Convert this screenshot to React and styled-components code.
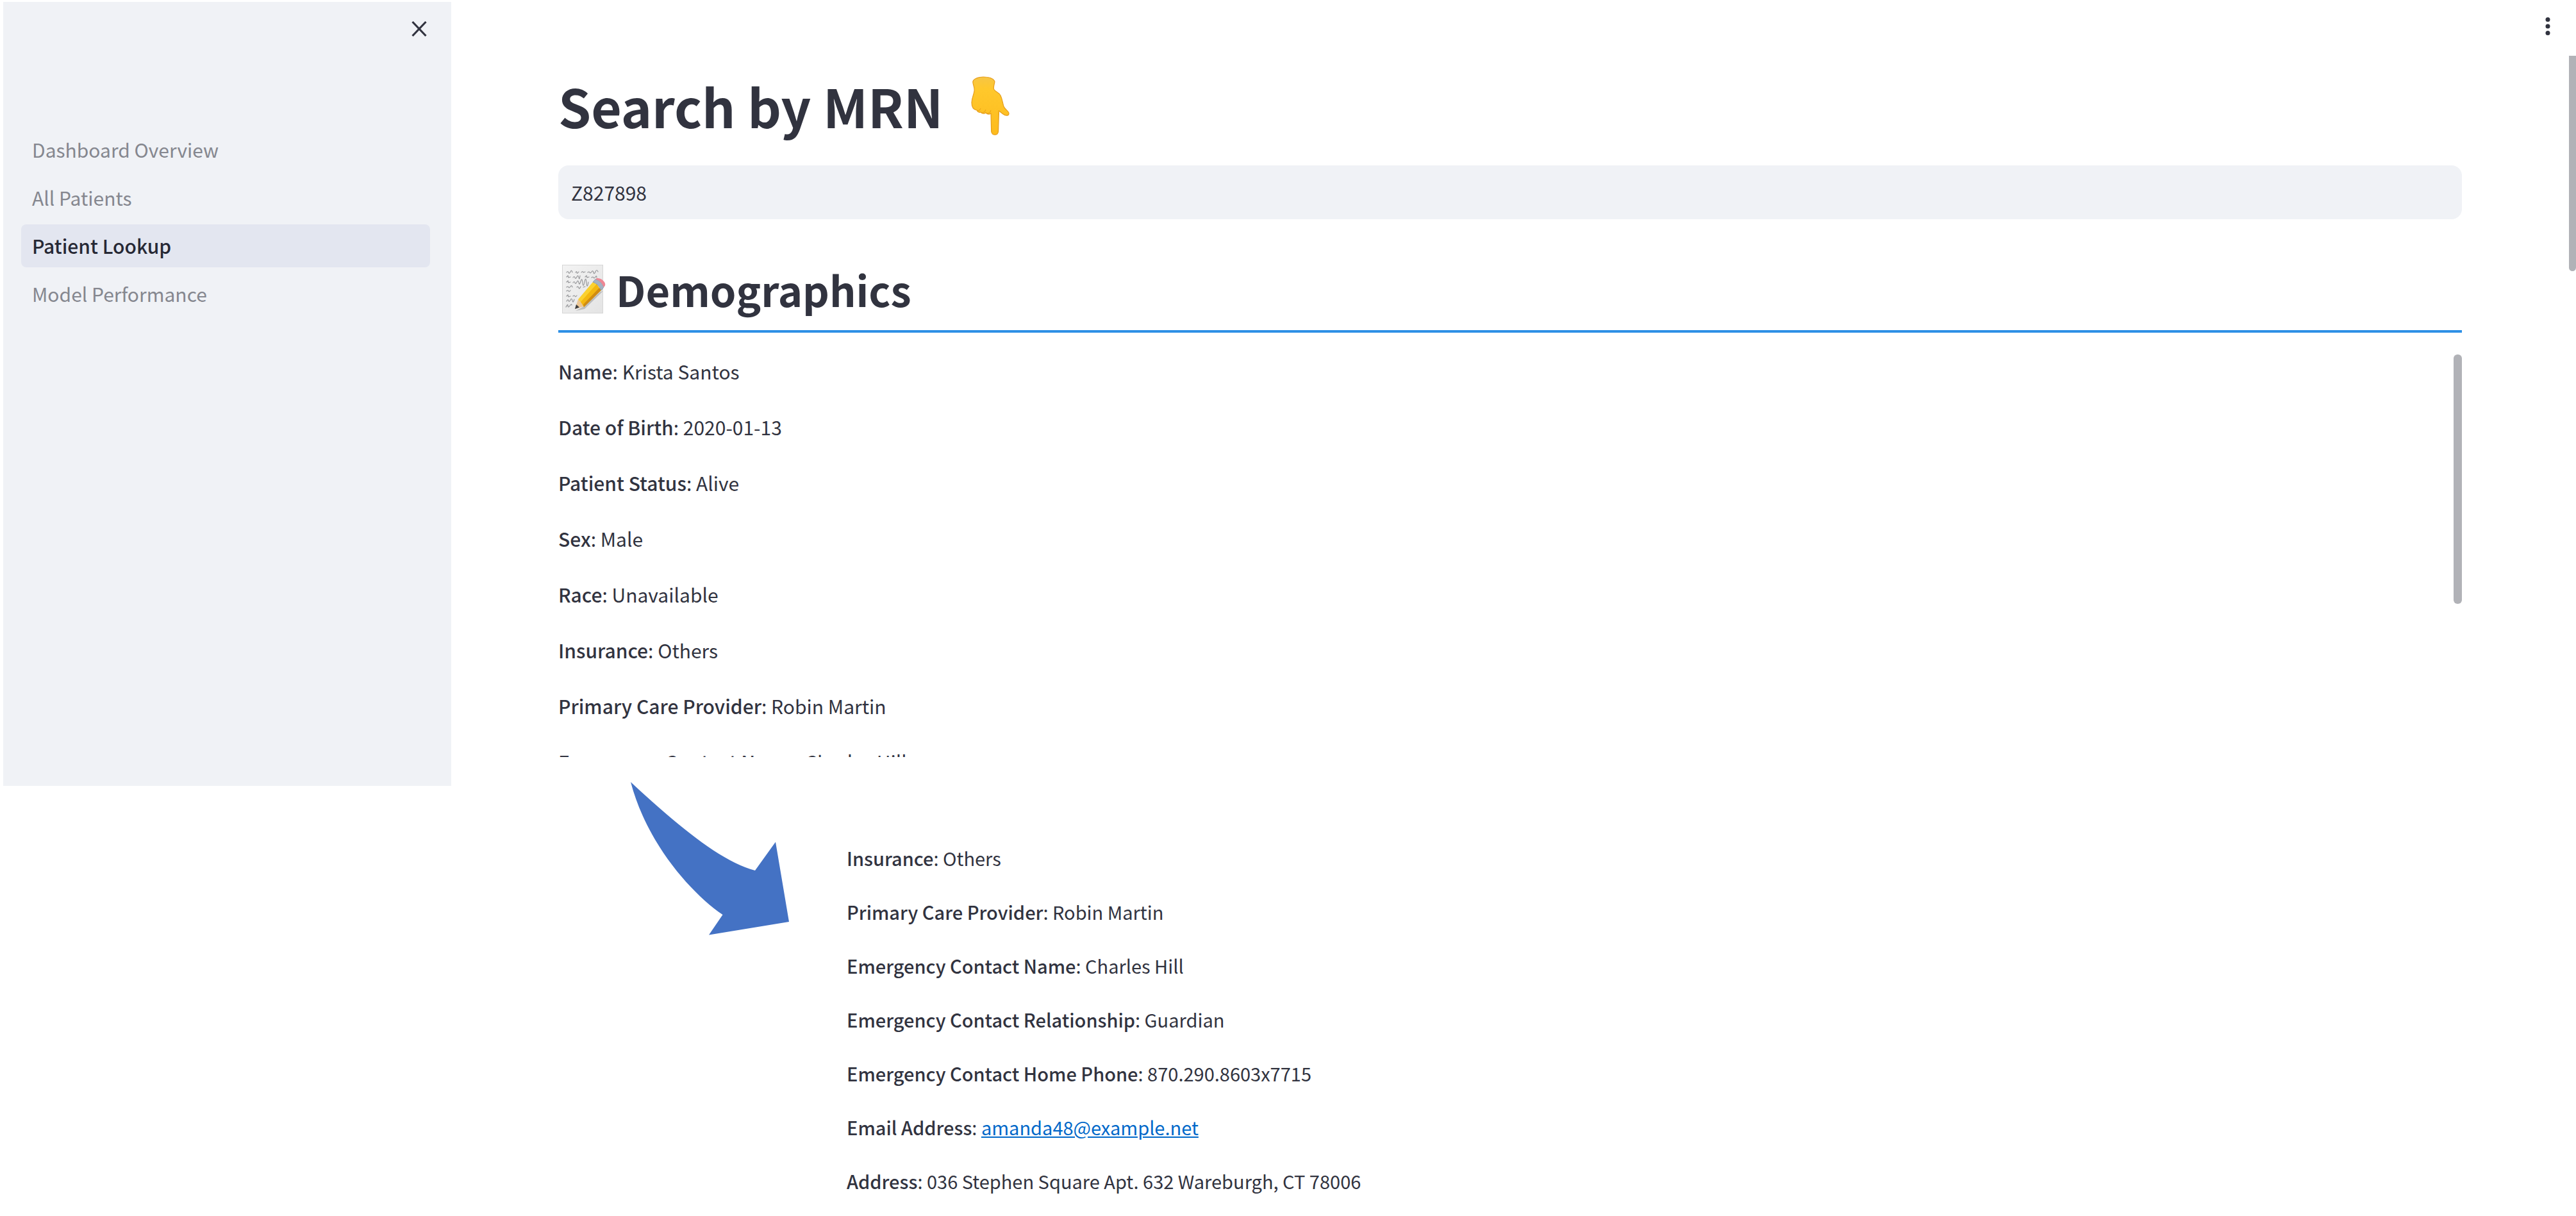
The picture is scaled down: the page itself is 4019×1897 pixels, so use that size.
import React, { useState } from 'react';
import styled, { createGlobalStyle } from 'styled-components';

const GlobalStyle = createGlobalStyle`
  *, *::before, *::after { box-sizing: border-box; }
  body {
    margin: 0;
    background: #ffffff;
    color: #31333f;
    font-family: "Noto Sans CJK JP", "Noto Sans", sans-serif;
    font-size: 30px;
  }
`;

const Page = styled.div`
  display: flex;
  align-items: flex-start;
`;

/* Sidebar */
const Sidebar = styled.aside`
  flex: none;
  width: 699px;
  min-height: 1223px;
  margin: 3px 0 0 5px;
  padding: 25px 33px 0 28px;
  background: #f0f2f6;
`;

const SidebarHeader = styled.div`
  display: flex;
  justify-content: flex-end;
  height: 172px;
`;

const IconButton = styled.button`
  display: flex;
  align-items: center;
  justify-content: center;
  width: 34px;
  height: 34px;
  padding: 0;
  border: 0;
  background: none;
  color: #31333f;
  cursor: pointer;
`;

const Nav = styled.nav`
  display: flex;
  flex-direction: column;
  gap: 8px;
`;

const NavLink = styled.a`
  padding: 0 17px;
  border-radius: 8px;
  line-height: 67px;
  text-decoration: none;
  color: ${(p) => (p.$active ? '#262834' : '#85878f')};
  background: ${(p) => (p.$active ? '#e3e6f0' : 'transparent')};
  font-weight: ${(p) => (p.$active ? 500 : 400)};
`;

/* Main area */
const Main = styled.main`
  flex: 1;
  min-width: 0;
`;

const Toolbar = styled.header`
  display: flex;
  justify-content: flex-end;
  height: 87px;
  padding: 24px 27px 0 0;
`;

const Viewport = styled.div`
  display: flex;
  align-items: flex-start;
`;

const Content = styled.div`
  flex: 1;
  min-width: 0;
  padding: 29px 167px 0;
`;

const PageThumb = styled.div`
  flex: none;
  width: 11px;
  height: 336px;
  border-radius: 0 0 6px 6px;
  background: #b1b2b7;
`;

const Title = styled.h1`
  display: flex;
  align-items: center;
  gap: 44px;
  margin: 0 0 44px;
  font-size: 82px;
  line-height: 98px;
  font-weight: 700;
`;

const SearchInput = styled.input`
  display: block;
  width: 100%;
  height: 84px;
  padding: 0 20px;
  border: 0;
  border-radius: 16px;
  outline: none;
  background: #f0f2f6;
  color: #31333f;
  font: inherit;
`;

const SectionHeading = styled.h2`
  display: flex;
  align-items: center;
  gap: 16px;
  margin: 70px 0 34px;
  padding-bottom: 25px;
  border-bottom: 4px solid #2e90e6;
  font-size: 65px;
  line-height: 78px;
  font-weight: 700;
`;

const ScrollBox = styled.section`
  display: flex;
  justify-content: space-between;
  align-items: flex-start;
  height: 628px;
  overflow: hidden;
`;

const ScrollBody = styled.div`
  padding-top: 3px;
`;

const ScrollThumb = styled.div`
  flex: none;
  width: 13px;
  height: 389px;
  border-radius: 6px;
  background: #b1b2b7;
`;

const FieldList = styled.div`
  display: flex;
  flex-direction: column;
  gap: 40px;
  font-size: ${(p) => (p.$small ? 29 : 30)}px;
  line-height: ${(p) => (p.$small ? 44 : 47)}px;
`;

const Field = styled.p`
  margin: 0;
  white-space: nowrap;
`;

const Label = styled.strong`
  font-weight: 500;
`;

const MailLink = styled.a`
  color: #0068c9;
  text-decoration: underline;
`;

const Excerpt = styled.section`
  display: flex;
  align-items: flex-start;
  gap: 90px;
  padding: 39px 0 0 113px;
`;

const ExcerptBody = styled.div`
  padding-top: 96px;
`;

const CloseIcon = () => (
  <svg width="26" height="28" viewBox="0 0 26 28" aria-hidden="true">
    <path d="M2.5 3 23.5 25M23.5 3 2.5 25" fill="none" stroke="currentColor" strokeWidth="3.2" />
  </svg>
);

const KebabIcon = () => (
  <svg width="10" height="30" viewBox="0 0 10 30" aria-hidden="true" fill="currentColor">
    <circle cx="5" cy="4.5" r="3.5" />
    <circle cx="5" cy="15" r="3.5" />
    <circle cx="5" cy="25.5" r="3.5" />
  </svg>
);

const HandIcon = () => (
  <svg width="60" height="92" viewBox="0 0 60 92" role="img" aria-label="Pointing down">
    <defs>
      <linearGradient id="skin" x1="0" y1="0" x2="0" y2="1">
        <stop offset="0" stopColor="#f6c545" />
        <stop offset="0.2" stopColor="#ffc82c" />
        <stop offset="1" stopColor="#fdbb1d" />
      </linearGradient>
    </defs>
    <path
      d="M3 8C4 4 11 1 19 1S34 3 36.500 7C38 9 35 13 35.300 19C36 24 43 24 46 30C49 36 49 41 51 47C53 52 59 54 59 58C59 62 54 62 50 59L43.500 54L42.500 86C42.500 93 32 93 31.700 86L31 58C28 60 25 59 23 57C20 59 17 58 15 56C12 57 10 55 9 53C3 52 1 47 1 41C1 34 4 30 5 23C6 16 2 12 3 8Z"
      fill="url(#skin)"
      stroke="#e59c1a"
      strokeWidth="1.200"
    />
    <path d="M43.500 54L43 60" fill="none" stroke="#eda51c" strokeWidth="1.300" />
    <path d="M9 53C12 55 14 52 15 50M15 56C18 58 22 56 23 52M23 57C27 59 30 57 31 53" fill="none" stroke="#eba61c" strokeWidth="1.100" />
  </svg>
);

const MemoIcon = () => (
  <svg width="74" height="76" viewBox="0 0 74 76" role="img" aria-label="Memo">
    <defs>
      <linearGradient id="sheet" x1="0" y1="0" x2="1" y2="1">
        <stop offset="0" stopColor="#f3f3f3" />
        <stop offset="1" stopColor="#e4e4e4" />
      </linearGradient>
    </defs>
    <rect x="6.500" y="0.500" width="63" height="75" fill="url(#sheet)" stroke="#d6d6d6" />
    <g fill="none" stroke="#96979a" strokeWidth="1.200" strokeLinecap="round">
      <path d="M13 12q2-3 3 0t3-1 3 1M27 12q2-3 2 0t3-1M36 12q2-3 3 0l3-1M46 12q2-2 3 0t3-1 3 1 3-1 4 0" />
      <path d="M13 19l2-2 1 3 3-1M23 20q2-3 3 0t3-1 3 1 2-3M42 19l2-2 1 3 3-1M52 20q2-2 3 0t3-1 2 1" />
      <path d="M13 27l2-2 1 3 3-1M23 28q2-3 3 0t3-1 3 1 3-2 3 2 3-1 3 1 3-1" />
      <path d="M13 35q2-2 3 0t3-1 3 1M29 35q2-2 3 1t3-2M39 35l3-1" />
      <path d="M13 41q2-2 3 0t3-1" />
      <path d="M13 49l2-2 1 3 3-1M23 49q2-2 3 0t3-1" />
      <path d="M13 57q2-4 3-1t3-1 3 1 3-2" />
      <path d="M12 66q3-6 3-2t3 0 3-1" />
    </g>
    <path d="M27 72L41 69L70 41L66 42L38 66Z" fill="#8a8a8a" opacity="0.450" />
    <path d="M26 69L31 54L40 57L40 65Z" fill="#ecc796" />
    <path d="M26 69L28 62L33 66.500Z" fill="#3c3c3e" />
    <path d="M31 54L54 27L61 31L37 60Z" fill="#fbd12f" />
    <path d="M35 58L60 30L66 39L40 66Z" fill="#f3b70f" />
    <path d="M39 62L64 36L67 40L40 66Z" fill="#d08c12" />
    <path d="M54 27L58 22.500Q67 25 71 35L67 40Q63 30 54 27Z" fill="#a4b2c2" stroke="#8393a5" strokeWidth="0.800" />
    <path d="M58 22.500L60 21Q67 20 72 27Q75 32 71 35Q67 25 58 22.500Z" fill="#ee8794" />
  </svg>
);

const ArrowShape = () => (
  <svg width="247" height="239" viewBox="0 0 247 239" aria-hidden="true">
    <path
      d="M0 0C70 65 140 124 194 138L226 93.500L247 218L122 238.500L143.500 207C93 172 25 95 0 0Z"
      fill="#4472c4"
    />
  </svg>
);

const pages = ['Dashboard Overview', 'All Patients', 'Patient Lookup', 'Model Performance'];

const demographics = [
  ['Name', 'Krista Santos'],
  ['Date of Birth', '2020-01-13'],
  ['Patient Status', 'Alive'],
  ['Sex', 'Male'],
  ['Race', 'Unavailable'],
  ['Insurance', 'Others'],
  ['Primary Care Provider', 'Robin Martin'],
  ['Emergency Contact Name', 'Charles Hill'],
];

const contact = [
  ['Insurance', 'Others'],
  ['Primary Care Provider', 'Robin Martin'],
  ['Emergency Contact Name', 'Charles Hill'],
  ['Emergency Contact Relationship', 'Guardian'],
  ['Emergency Contact Home Phone', '870.290.8603x7715'],
  ['Email Address', 'amanda48@example.net'],
  ['Address', '036 Stephen Square Apt. 632 Wareburgh, CT 78006'],
];

function Fields({ items, small }) {
  return (
    <FieldList $small={small}>
      {items.map(([label, value]) => (
        <Field key={label}>
          <Label>{label}</Label>:{' '}
          {value.includes('@') ? <MailLink href={`mailto:${value}`}>{value}</MailLink> : value}
        </Field>
      ))}
    </FieldList>
  );
}

export default function App() {
  const [mrn, setMrn] = useState('Z827898');
  return (
    <Page>
      <GlobalStyle />
      <Sidebar>
        <SidebarHeader>
          <IconButton type="button" aria-label="Close sidebar"><CloseIcon /></IconButton>
        </SidebarHeader>
        <Nav>
          {pages.map((name) => (
            <NavLink key={name} href="#" $active={name === 'Patient Lookup'}>{name}</NavLink>
          ))}
        </Nav>
      </Sidebar>
      <Main>
        <Toolbar>
          <IconButton type="button" aria-label="Menu"><KebabIcon /></IconButton>
        </Toolbar>
        <Viewport>
          <Content>
            <Title id="mrn-title">Search by MRN<HandIcon /></Title>
            <SearchInput
              type="text"
              aria-labelledby="mrn-title"
              value={mrn}
              onChange={(e) => setMrn(e.target.value)}
            />
            <SectionHeading><MemoIcon />Demographics</SectionHeading>
            <ScrollBox>
              <ScrollBody><Fields items={demographics} /></ScrollBody>
              <ScrollThumb />
            </ScrollBox>
            <Excerpt>
              <ArrowShape />
              <ExcerptBody><Fields items={contact} small /></ExcerptBody>
            </Excerpt>
          </Content>
          <PageThumb />
        </Viewport>
      </Main>
    </Page>
  );
}
